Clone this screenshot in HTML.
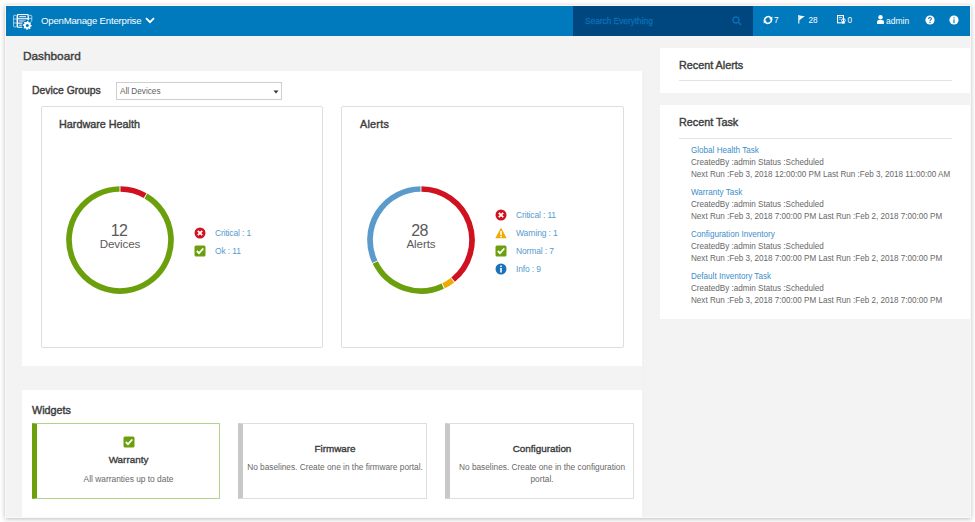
<!DOCTYPE html>
<html><head><meta charset="utf-8">
<style>
*{margin:0;padding:0;box-sizing:border-box}
html,body{width:975px;height:522px;overflow:hidden;background:#fff;font-family:"Liberation Sans",sans-serif}
.a{position:absolute}
#frame{position:absolute;left:6px;top:6px;width:964px;height:511px;background:#f3f3f3;box-shadow:0 0 0 1px #fbf7f5, 0 1px 5px 1px rgba(0,0,0,0.27);overflow:hidden}
#hdr{position:absolute;left:0;top:0;width:964px;height:30px;background:#0079bd}
.t{position:absolute;white-space:nowrap;line-height:1}
.panel{position:absolute;background:#fff}
.card{position:absolute;background:#fff;border:1px solid #dedede;border-radius:2px}
.h2{color:#3d3d3d;-webkit-text-stroke:0.4px #3d3d3d}
.lg{color:#559bcf}
.task{position:absolute;left:30.5px;font-size:9px;line-height:11.8px;color:#686868;white-space:nowrap;transform:scaleX(0.9);transform-origin:0 0}
.task .n{color:#3d8ec9}
.wcard{position:absolute;top:417px;height:76px;background:#fff;border:1px solid #dedede;border-left:5px solid #c8c8c8;border-radius:1px}
</style></head><body>
<div id="frame">
  <div id="hdr">
    <!-- logo icon -->
    <svg class="a" style="left:7px;top:8px" width="20" height="17" viewBox="0 0 20 17">
      <g fill="none" stroke="#fff" stroke-width="0.8" opacity="0.8">
        <rect x="0.6" y="1.3" width="3.2" height="11.6" rx="0.6"/>
        <path d="M0.6 5 H3.8 M0.6 9 H3.8"/>
        <rect x="15.6" y="1.3" width="3.2" height="6.2" rx="0.6"/>
        <path d="M15.6 4.6 H18.8"/>
      </g>
      <rect x="4" y="0" width="11.6" height="13.7" rx="0.8" fill="#fff"/>
      <g fill="#0a72b6">
        <rect x="5.1" y="1.1" width="9.4" height="3.1"/>
        <rect x="5.1" y="5.3" width="9.4" height="3.3"/>
        <rect x="5.1" y="9.7" width="9.4" height="3.0"/>
      </g>
      <g fill="#fff">
        <rect x="6.2" y="2.2" width="6.8" height="1"/>
        <rect x="6.2" y="6.5" width="6.8" height="1"/>
        <rect x="6.2" y="10.7" width="4" height="1"/>
      </g>
      <circle cx="14.3" cy="11.4" r="5.4" fill="#0079bd"/>
      <path fill="#fff" d="M14.30 6.90 L15.18 6.99 L15.60 8.26 L16.19 8.57 L17.48 8.22 L18.04 8.90 L17.44 10.10 L17.63 10.74 L18.80 11.40 L18.71 12.28 L17.44 12.70 L17.13 13.29 L17.48 14.58 L16.80 15.14 L15.60 14.54 L14.96 14.73 L14.30 15.90 L13.42 15.81 L13.00 14.54 L12.41 14.23 L11.12 14.58 L10.56 13.90 L11.16 12.70 L10.97 12.06 L9.80 11.40 L9.89 10.52 L11.16 10.10 L11.47 9.51 L11.12 8.22 L11.80 7.66 L13.00 8.26 L13.64 8.07Z"/>
      <circle cx="14.3" cy="11.4" r="1.5" fill="#0079bd"/>
    </svg>
    <div class="t" style="left:35px;top:10.2px;font-size:9.6px;color:#fff;letter-spacing:-0.2px">OpenManage Enterprise</div>
    <svg class="a" style="left:138.7px;top:11.2px" width="10" height="7" viewBox="0 0 10 7"><path d="M1 1.2 L5 5.2 L9 1.2" fill="none" stroke="#fff" stroke-width="1.8"/></svg>

    <div class="a" style="left:567px;top:0;width:180px;height:30px;background:#00467f"></div>
    <div class="t" style="left:579px;top:10.5px;font-size:8.3px;color:#0a6db3;-webkit-text-stroke:0.35px #0a6db3">Search Everything</div>
    <svg class="a" style="left:725.5px;top:9.5px" width="10" height="10" viewBox="0 0 10 10"><circle cx="4" cy="4" r="3" fill="none" stroke="#0a6db3" stroke-width="1.4"/><path d="M6.2 6.2 L9 9" stroke="#0a6db3" stroke-width="1.6"/></svg>

    <!-- sync -->
    <svg class="a" style="left:756.8px;top:8.6px" width="10" height="10" viewBox="0 0 10 10"><path d="M1.72 5.88 A3.4 3.4 0 0 1 7.94 3.30" fill="none" stroke="#fff" stroke-width="1.6"/><path d="M8.28 4.12 A3.4 3.4 0 0 1 2.06 6.70" fill="none" stroke="#fff" stroke-width="1.6"/><path d="M9.3 1.4 L9.3 4.9 L6.2 4.1 Z" fill="#fff"/><path d="M0.7 8.6 L0.7 5.1 L3.8 5.9 Z" fill="#fff"/></svg>
    <div class="t" style="left:768px;top:10.6px;font-size:8.2px;color:#fff">7</div>
    <!-- flag -->
    <svg class="a" style="left:792px;top:8.8px" width="8" height="9" viewBox="0 0 8 9"><path d="M0.8 0 V8.6" stroke="#fff" stroke-width="1.1"/><path d="M1.2 0.6 L6.8 1.2 L3.6 3.4 L1.2 5.6 Z" fill="#fff"/></svg>
    <div class="t" style="left:802.5px;top:10.6px;font-size:8.2px;color:#fff">28</div>
    <!-- doc -->
    <svg class="a" style="left:831px;top:9.2px" width="9" height="8.5" viewBox="0 0 9 8.5"><rect x="0.55" y="0.55" width="5.9" height="7.3" fill="none" stroke="#fff" stroke-width="1.1"/><rect x="1.8" y="2" width="3" height="1" fill="#fff" opacity="0.8"/><rect x="1.8" y="3.8" width="2" height="1" fill="#fff" opacity="0.6"/><circle cx="6.4" cy="5.4" r="1.8" fill="none" stroke="#fff" stroke-width="1"/><rect x="5" y="7.2" width="3" height="1.3" fill="#fff"/></svg>
    <div class="t" style="left:841.5px;top:10.6px;font-size:8.2px;color:#fff">0</div>
    <!-- user -->
    <svg class="a" style="left:870.8px;top:8.8px" width="7" height="9" viewBox="0 0 7 9"><circle cx="3.5" cy="2.2" r="2.2" fill="#fff"/><path d="M0 9 V7 Q0 5.1 2 5.1 H5 Q7 5.1 7 7 V9 Z" fill="#fff"/></svg>
    <div class="t" style="left:880px;top:10.5px;font-size:8.5px;color:#fff">admin</div>
    <!-- help -->
    <svg class="a" style="left:918.7px;top:8.6px" width="10" height="10" viewBox="0 0 10 10"><circle cx="5" cy="5" r="4.6" fill="#fff"/><path d="M3.6 3.9 Q3.6 2.5 5 2.5 Q6.4 2.5 6.4 3.7 Q6.4 4.5 5.6 4.9 Q5 5.2 5 6.2" fill="none" stroke="#0079bd" stroke-width="1.05"/><rect x="4.45" y="6.9" width="1.1" height="1.1" fill="#0079bd"/></svg>
    <!-- info -->
    <svg class="a" style="left:943px;top:8.6px" width="10" height="10" viewBox="0 0 10 10"><circle cx="5" cy="5" r="4.6" fill="#fff"/><rect x="4.45" y="4.3" width="1.1" height="3.8" fill="#0079bd"/><rect x="4.45" y="2.2" width="1.1" height="1.2" fill="#0079bd"/></svg>
  </div>

  <div class="t h2" style="left:17px;top:45px;font-size:11.8px">Dashboard</div>

  <!-- left main panel -->
  <div class="panel" style="left:16px;top:65px;width:620px;height:295px"></div>
  <div class="t h2" style="left:26px;top:79.6px;font-size:10.4px">Device Groups</div>
  <div class="a" style="left:110px;top:76px;width:166px;height:18px;border:1px solid #cfcfcf;background:#fff"></div>
  <div class="t" style="left:114px;top:81.8px;font-size:8.2px;color:#606060">All Devices</div>
  <svg class="a" style="left:267px;top:83.5px" width="6" height="4" viewBox="0 0 6 4"><path d="M0.5 0.5 H5.5 L3 3.5 Z" fill="#333"/></svg>

  <!-- hardware health card -->
  <div class="card" style="left:35px;top:100px;width:282px;height:242px"></div>
  <div class="t h2" style="left:53px;top:113px;font-size:10.8px">Hardware Health</div>
  <svg class="a" style="left:59px;top:179px" width="110" height="110" viewBox="0 0 110 110">
    <g fill="none" stroke-width="5.7">
      <path d="M55.45 4.00 A51 51 0 0 1 80.11 10.61" stroke="#d0111f"/>
      <path d="M80.89 11.06 A51 51 0 1 1 54.55 4.00" stroke="#6c9f0c"/>
    </g>
  </svg>
  <div class="t" style="left:83px;top:216.5px;width:60px;text-align:center;font-size:16px;color:#5a5a5a;letter-spacing:-0.6px">12</div>
  <div class="t" style="left:84px;top:232px;width:60px;text-align:center;font-size:11.6px;color:#5a5a5a;letter-spacing:-0.1px">Devices</div>
  <svg class="a" style="left:188px;top:221px" width="12" height="12" viewBox="0 0 12 12"><circle cx="6" cy="6" r="5.5" fill="#d0111f"/><path d="M3.8 3.8 L8.2 8.2 M8.2 3.8 L3.8 8.2" stroke="#fff" stroke-width="1.8"/></svg>
  <div class="t lg" style="left:209px;top:223.3px;font-size:8.5px;letter-spacing:-0.15px">Critical : 1</div>
  <svg class="a" style="left:188px;top:239px" width="12" height="12" viewBox="0 0 12 12"><rect x="0.5" y="0.5" width="11" height="11" rx="1.5" fill="#6c9f0c"/><path d="M2.8 6 L5 8.2 L9.3 3.5" fill="none" stroke="#fff" stroke-width="1.8"/></svg>
  <div class="t lg" style="left:209px;top:241.3px;font-size:8.5px;letter-spacing:-0.15px">Ok : 11</div>

  <!-- alerts card -->
  <div class="card" style="left:335px;top:100px;width:283px;height:242px"></div>
  <div class="t h2" style="left:354px;top:113px;font-size:10.8px;letter-spacing:0.25px">Alerts</div>
  <svg class="a" style="left:359.5px;top:179px" width="110" height="110" viewBox="0 0 110 110">
    <g fill="none" stroke-width="5.7">
      <path d="M55.45 4.00 A51 51 0 0 1 87.15 94.59" stroke="#d0111f"/>
      <path d="M86.44 95.15 A51 51 0 0 1 77.53 100.75" stroke="#f1ab00"/>
      <path d="M76.72 101.14 A51 51 0 0 1 9.25 77.53" stroke="#6c9f0c"/>
      <path d="M8.86 76.72 A51 51 0 0 1 54.55 4.00" stroke="#5a9bcb"/>
    </g>
  </svg>
  <div class="t" style="left:383.5px;top:216.5px;width:60px;text-align:center;font-size:16px;color:#5a5a5a;letter-spacing:-0.6px">28</div>
  <div class="t" style="left:385px;top:232px;width:60px;text-align:center;font-size:11.6px;color:#5a5a5a;letter-spacing:-0.1px">Alerts</div>
  <svg class="a" style="left:489px;top:203px" width="12" height="12" viewBox="0 0 12 12"><circle cx="6" cy="6" r="5.5" fill="#d0111f"/><path d="M3.8 3.8 L8.2 8.2 M8.2 3.8 L3.8 8.2" stroke="#fff" stroke-width="1.8"/></svg>
  <div class="t lg" style="left:510px;top:205.3px;font-size:8.5px;letter-spacing:-0.15px">Critical : 11</div>
  <svg class="a" style="left:489px;top:221px" width="12" height="12" viewBox="0 0 12 12"><path d="M6 0.5 L11.7 11.3 H0.3 Z" fill="#f1ab00"/><rect x="5.2" y="4" width="1.6" height="4" fill="#fff"/><rect x="5.2" y="8.8" width="1.6" height="1.5" fill="#fff"/></svg>
  <div class="t lg" style="left:510px;top:223.3px;font-size:8.5px;letter-spacing:-0.15px">Warning : 1</div>
  <svg class="a" style="left:489px;top:239px" width="12" height="12" viewBox="0 0 12 12"><rect x="0.5" y="0.5" width="11" height="11" rx="1.5" fill="#6c9f0c"/><path d="M2.8 6 L5 8.2 L9.3 3.5" fill="none" stroke="#fff" stroke-width="1.8"/></svg>
  <div class="t lg" style="left:510px;top:241.3px;font-size:8.5px;letter-spacing:-0.15px">Normal : 7</div>
  <svg class="a" style="left:489px;top:257px" width="12" height="12" viewBox="0 0 12 12"><circle cx="6" cy="6" r="5.5" fill="#1a72b8"/><rect x="5.2" y="5" width="1.6" height="4.5" fill="#fff"/><rect x="5.2" y="2.5" width="1.6" height="1.6" fill="#fff"/></svg>
  <div class="t lg" style="left:510px;top:259.3px;font-size:8.5px;letter-spacing:-0.15px">Info : 9</div>

  <!-- widgets panel -->
  <div class="panel" style="left:16px;top:384px;width:620px;height:140px"></div>
  <div class="t h2" style="left:26px;top:399px;font-size:10.8px">Widgets</div>
  <div class="wcard" style="left:26px;width:188px;border-color:#b3d488;border-left-color:#6c9f0c"></div>
  <svg class="a" style="left:116.5px;top:430px" width="12" height="12" viewBox="0 0 12 12"><rect x="0.5" y="0.5" width="11" height="11" rx="1.5" fill="#6c9f0c"/><path d="M2.8 6 L5 8.2 L9.3 3.5" fill="none" stroke="#fff" stroke-width="1.8"/></svg>
  <div class="t" style="left:26px;width:188px;text-align:center;top:448.5px;font-size:9.9px;color:#3a3a3a;-webkit-text-stroke:0.35px #3a3a3a;padding-left:5px">Warranty</div>
  <div class="t" style="left:26px;width:188px;text-align:center;top:468.5px;font-size:8.4px;color:#686868;padding-left:5px">All warranties up to date</div>

  <div class="wcard" style="left:232px;width:189px"></div>
  <div class="t" style="left:232px;width:189px;text-align:center;top:437.5px;font-size:9.9px;color:#3a3a3a;-webkit-text-stroke:0.35px #3a3a3a;padding-left:5px">Firmware</div>
  <div class="t" style="left:232px;width:189px;text-align:center;top:456.5px;font-size:8.3px;color:#686868;padding-left:5px">No baselines. Create one in the firmware portal.</div>

  <div class="wcard" style="left:439px;width:189px"></div>
  <div class="t" style="left:439px;width:189px;text-align:center;top:437.5px;font-size:9.9px;color:#3a3a3a;-webkit-text-stroke:0.35px #3a3a3a;padding-left:5px">Configuration</div>
  <div class="a" style="left:444px;width:184px;text-align:center;top:455px;font-size:8.3px;line-height:12.2px;color:#686868">No baselines. Create one in the configuration portal.</div>

  <div class="a" style="left:637px;top:65px;width:1px;height:460px;background:#f0f0f0"></div>
  <!-- right panels -->
  <div class="panel" style="left:654px;top:42px;width:310px;height:45px"></div>
  <div class="t h2" style="left:673px;top:54px;font-size:10.8px">Recent Alerts</div>
  <div class="a" style="left:673px;top:74px;width:273px;height:1px;background:#e3e3e3"></div>

  <div class="panel" style="left:654px;top:99px;width:310px;height:214px"></div>
  <div class="t h2" style="left:673px;top:111px;font-size:10.8px">Recent Task</div>
  <div class="a" style="left:673px;top:132px;width:273px;height:1px;background:#e3e3e3"></div>
  <div class="a" style="left:654px;top:139px;width:310px">
    <div class="task" style="top:0"><span class="n">Global Health Task</span><br>CreatedBy :admin Status :Scheduled<br>Next Run :Feb 3, 2018 12:00:00 PM Last Run :Feb 3, 2018 11:00:00 AM</div>
    <div class="task" style="top:42px"><span class="n">Warranty Task</span><br>CreatedBy :admin Status :Scheduled<br>Next Run :Feb 3, 2018 7:00:00 PM Last Run :Feb 2, 2018 7:00:00 PM</div>
    <div class="task" style="top:84px"><span class="n">Configuration Inventory</span><br>CreatedBy :admin Status :Scheduled<br>Next Run :Feb 3, 2018 7:00:00 PM Last Run :Feb 2, 2018 7:00:00 PM</div>
    <div class="task" style="top:126px"><span class="n">Default Inventory Task</span><br>CreatedBy :admin Status :Scheduled<br>Next Run :Feb 3, 2018 7:00:00 PM Last Run :Feb 2, 2018 7:00:00 PM</div>
  </div>
</div>
</body></html>
